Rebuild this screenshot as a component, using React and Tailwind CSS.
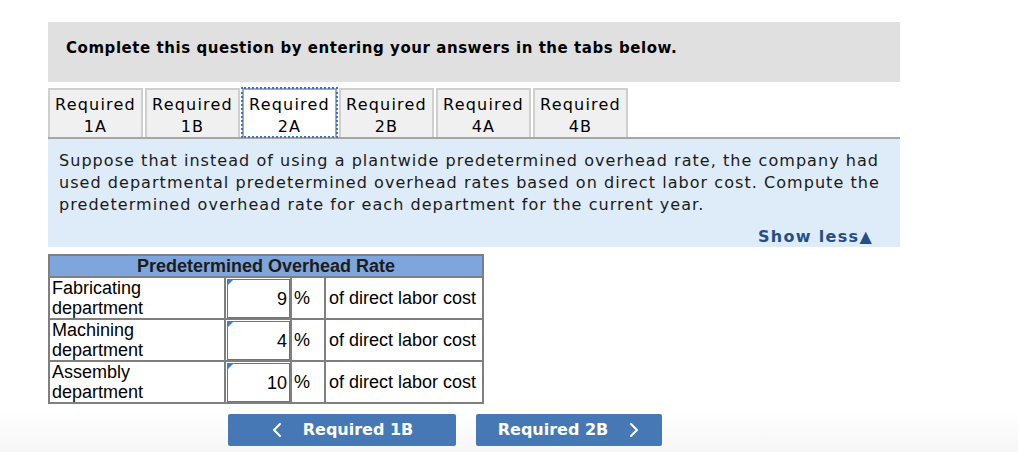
import React from "react";

const tabs = [
  ["Required", "1A"],
  ["Required", "1B"],
  ["Required", "2A"],
  ["Required", "2B"],
  ["Required", "4A"],
  ["Required", "4B"],
];

const rows = [
  ["Fabricating", "department", "9"],
  ["Machining", "department", "4"],
  ["Assembly", "department", "10"],
];

export default function App() {
  return (
    <div className="w-[1018px] h-[452px] bg-white overflow-hidden relative">
      <div className="absolute left-0 right-0 bottom-0 h-[40px] bg-gradient-to-b from-white to-[#f6f6f6]" />
      <div className="relative pt-[22px] pl-[48px] w-[900px]">
        <div className="h-[60px] bg-[#e0e0e0] pl-[18px] pt-[15px] font-['DejaVu_Sans',sans-serif] font-bold text-[15px] tracking-[0.55px] text-black">
          Complete this question by entering your answers in the tabs below.
        </div>
        <div className="mt-[6px] flex gap-[2px] font-['DejaVu_Sans',sans-serif] text-[16px] tracking-[1.2px] leading-[22px] text-black">
          {tabs.map((t, i) => (
            <div
              key={i}
              className={
                i === 2
                  ? "w-[95px] h-[49px] bg-white border-2 border-b-0 border-[#a8a8a8] outline-2 outline-dotted outline-[#3f74bd] -outline-offset-1 flex flex-col items-center pt-[4px]"
                  : "w-[95px] h-[49px] bg-[#f0f0f0] border-2 border-b-0 border-[#cfcfcf] flex flex-col items-center pt-[4px]"
              }
            >
              <span>{t[0]}</span>
              <span>{t[1]}</span>
            </div>
          ))}
        </div>
        <div className="h-[2px] bg-[#a6a6a6]" />
        <div className="h-[108px] bg-[#deebf8] pl-[11px] pt-[11px] pr-[12px] font-['DejaVu_Sans',sans-serif] text-[16px] tracking-[1.05px] leading-[22px] text-[#1a1a1a] flex flex-col">
          <p>
            Suppose that instead of using a plantwide predetermined overhead rate, the company had used
            departmental predetermined overhead rates based on direct labor cost. Compute the predetermined
            overhead rate for each department for the current year.
          </p>
          <div className="mt-auto mb-0 self-end pr-[15px] font-bold text-[#254d87] text-[16px] tracking-[1.3px] leading-[20px]">
            Show less▲
          </div>
        </div>
        <table className="mt-[7px] border-collapse border-2 border-[#7f7f7f] font-['Liberation_Sans',Arial,sans-serif] text-[18px] text-black">
          <thead>
            <tr>
              <th colSpan={4} className="h-[22px] bg-[#7ea6dd] border-2 border-[#7f7f7f] text-center font-bold leading-[18px] p-0 text-[#1c1c1c]">
                Predetermined Overhead Rate
              </th>
            </tr>
          </thead>
          <tbody>
            {rows.map((r, i) => (
              <tr key={i} className="h-[40px]">
                <td className="w-[176px] border-2 border-[#7f7f7f] align-top leading-[20px] p-0">
                  <div className="pl-[2px]">{r[0]}</div>
                  <div className="pl-[2px]">{r[1]}</div>
                </td>
                <td className="w-[66px] border-2 border-[#7f7f7f] p-0 align-top">
                  <div className="relative h-[39px] mt-[1px] ml-[1px] border border-[#4a7ab8] bg-white flex items-center justify-end pr-[2px] leading-[20px]">
                    <div className="absolute left-0 top-0 w-0 h-0 border-t-[5px] border-r-[5px] border-t-[#3d7fd0] border-r-transparent" />
                    {r[2]}
                  </div>
                </td>
                <td className="w-[34px] border-2 border-[#7f7f7f] pl-[2px] p-0 leading-[20px]">%</td>
                <td className="w-[158px] border-2 border-[#7f7f7f] pl-[3px] p-0 whitespace-nowrap leading-[20px]">of direct labor cost</td>
              </tr>
            ))}
          </tbody>
        </table>
        <div className="mt-[10px] ml-[180px] flex gap-[20px] font-['DejaVu_Sans',sans-serif] font-bold text-[16px] text-white">
          <button className="w-[228px] h-[32px] bg-[#4678b6] rounded-[2px] flex items-center justify-center gap-[20px]">
            <svg width="12" height="16" viewBox="0 0 12 16" fill="none">
              <polyline points="9,2 3,8 9,14" stroke="white" strokeWidth="2" strokeLinecap="round" strokeLinejoin="round" />
            </svg>
            <span>Required 1B</span>
          </button>
          <button className="w-[186px] h-[32px] bg-[#4678b6] rounded-[2px] flex items-center justify-center gap-[20px]">
            <span>Required 2B</span>
            <svg width="12" height="16" viewBox="0 0 12 16" fill="none">
              <polyline points="3,2 9,8 3,14" stroke="white" strokeWidth="2" strokeLinecap="round" strokeLinejoin="round" />
            </svg>
          </button>
        </div>
      </div>
    </div>
  );
}
